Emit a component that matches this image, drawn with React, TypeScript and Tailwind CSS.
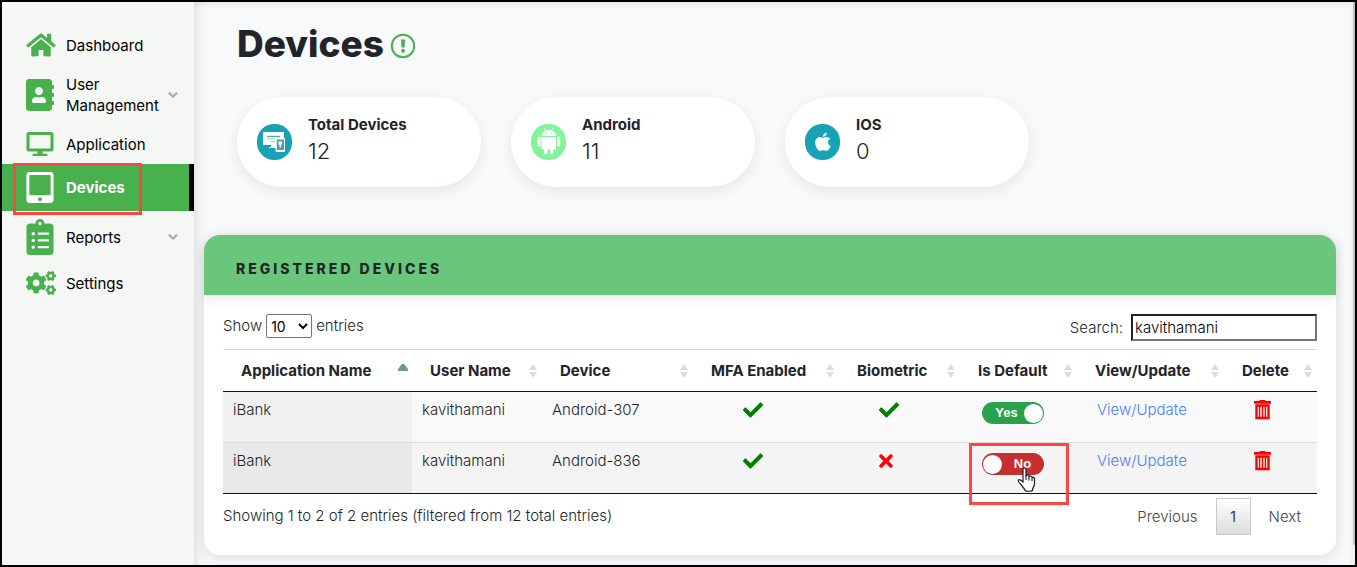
import { useState, type ReactNode } from "react";
import {
  FaAddressBook,
  FaCheck,
  FaChevronDown,
  FaClipboardList,
  FaCogs,
  FaDesktop,
  FaHome,
  FaTabletAlt,
  FaTimes,
} from "react-icons/fa";
import clsx from "clsx";

const navItems = [
  { label: "Dashboard", icon: <FaHome className="h-[26px] w-[30px]" /> },
  { label: "User Management", icon: <FaAddressBook className="h-8 w-7" />, submenu: true },
  { label: "Application", icon: <FaDesktop className="h-6 w-7" /> },
  { label: "Devices", icon: <FaTabletAlt className="h-[31px] w-7" />, active: true },
  { label: "Reports", icon: <FaClipboardList className="h-9 w-7" />, submenu: true },
  { label: "Settings", icon: <FaCogs className="h-6 w-[30px]" /> },
];

const columns = [
  { label: "Application Name", width: "w-[189px]" },
  { label: "User Name", width: "w-[130px]" },
  { label: "Device", width: "w-[151px]" },
  { label: "MFA Enabled", width: "w-[146px]" },
  { label: "Biometric", width: "w-[121px]" },
  { label: "Is Default", width: "w-[117px]" },
  { label: "View/Update", width: "w-[147px]" },
  { label: "Delete", width: "w-[93px]" },
];

const devices = [
  { app: "iBank", user: "kavithamani", device: "Android-307", mfa: true, biometric: true, isDefault: true },
  { app: "iBank", user: "kavithamani", device: "Android-836", mfa: true, biometric: false, isDefault: false },
];

function TotalIcon() {
  return (
    <svg viewBox="0 0 36 36" className="size-9" aria-hidden="true">
      <rect width="35" height="36" rx="17" fill="#17a2b8" />
      <path d="M6 8h21v13H6z" fill="#fff" />
      <path d="M14 21h5v2h2v1h-9v-1h2z" fill="#fff" />
      <path d="M10 12.500h13" stroke="#3fb0c2" strokeWidth="1.400" />
      <path d="M10 15h8M14 17.500h4" stroke="#8fd1db" strokeWidth="1.200" />
      <rect x="18.500" y="14" width="9.500" height="14" rx="1" fill="#fff" />
      <path d="M19.800 15.500H27v10.500h-7.200z" fill="#4f9fb0" />
      <path d="M21.500 17.500h3.500v3h-1v3h-1.500v-3h-1z" fill="#fff" />
    </svg>
  );
}

function AndroidIcon() {
  return (
    <svg viewBox="0 0 36 36" className="size-9" aria-hidden="true">
      <rect width="35" height="36" rx="17" fill="#81f49c" />
      <path d="M13.500 4.500l2 3M22 4.500l-2 3" stroke="#fff" strokeWidth="1" strokeLinecap="round" />
      <path d="M10.500 12c0-3.500 3-6 7.200-6s7.300 2.500 7.300 6z" fill="#fff" />
      <circle cx="14.500" cy="9.300" r=".7" fill="#81f49c" />
      <circle cx="21" cy="9.300" r=".7" fill="#81f49c" />
      <path d="M10.500 13H25v11a1.500 1.500 0 0 1-1.500 1.500H12a1.500 1.500 0 0 1-1.500-1.500z" fill="#fff" />
      <rect x="6.500" y="12.500" width="3.200" height="10" rx="1.600" fill="#fff" />
      <rect x="26" y="12.500" width="3.200" height="10" rx="1.600" fill="#fff" />
      <path d="M13 24h3.500v4.500a1.500 1.500 0 0 1-3.500 0zM19 24h3.500v4.500a1.500 1.500 0 0 1-3.500 0z" fill="#fff" />
    </svg>
  );
}

function AppleIcon() {
  return (
    <svg viewBox="0 0 36 36" className="size-9" aria-hidden="true">
      <rect width="35" height="36" rx="17" fill="#17a2b8" />
      <g transform="translate(10 7.300) scale(.041)">
        <path
          fill="#fff"
          d="M318.700 268.700c-.2-36.700 16.400-64.400 50-84.800-18.800-26.900-47.200-41.700-84.700-44.600-35.500-2.800-74.300 20.700-88.500 20.700-15 0-49.400-19.700-76.400-19.700C63.300 141.200 4 184.800 4 273.500q0 39.300 14.400 81.200c12.800 36.700 59 126.700 107.200 125.200 25.200-.6 43-17.900 75.800-17.900 31.800 0 48.300 17.900 76.400 17.900 48.600-.7 90.400-82.500 102.600-119.300-65.200-30.700-61.700-90-61.700-91.900zm-56.600-164.200c27.300-32.400 24.800-61.900 24-72.500-24.100 1.400-52 16.400-67.900 34.900-17.500 19.800-27.800 44.300-25.600 71.900 26.100 2 49.900-11.400 69.500-34.300z"
        />
      </g>
    </svg>
  );
}

function TrashIcon() {
  return (
    <svg viewBox="0 0 18 20" className="h-5 w-[18px]" aria-hidden="true">
      <path d="M5.500 0h6v1H17v2.700H0V1h5.500z" fill="#f00" />
      <path d="M2.500 5.500v12.500h12V5.500z" fill="#fff" stroke="#f00" strokeWidth="2.400" />
      <path d="M5.600 6v12M8.500 6v12M11.400 6v12" stroke="#f00" strokeWidth="1.500" />
    </svg>
  );
}

function HandCursor() {
  return (
    <svg
      viewBox="0 0 20 26"
      className="pointer-events-none absolute top-6 left-[57px] h-[26px] w-5"
      aria-hidden="true"
    >
      <path
        d="M6 2.500c0-2 3-2 3 0V9c0-1.500 2.800-1.500 3 0v1c0-1.500 2.700-1.300 3 .2v.8c.5-1 2.500-.8 2.500.8V17c0 2-1.500 3.500-2 5v1.500c-1.500 1-6 1-7.500 0C7.500 21 3.500 17.500 1.500 14.500c-.8-1.500 1-2.500 2.300-1.200L6 15z"
        fill="#fff"
        stroke="#1c1c28"
        strokeWidth="1.200"
      />
      <path d="M9 8v5M12 9.500v4M15 11v3" stroke="#1c1c28" strokeWidth="1.100" />
    </svg>
  );
}

const summary = [
  { label: "Total Devices", value: 12, icon: <TotalIcon /> },
  { label: "Android", value: 11, icon: <AndroidIcon /> },
  { label: "IOS", value: 0, icon: <AppleIcon /> },
];

function SortArrows({ sorted }: { sorted?: boolean }) {
  return (
    <svg viewBox="0 0 10 16" className="h-4 w-2.5 shrink-0" aria-hidden="true">
      <path d={sorted ? "M0 8V6l4-5h2l4 5v2z" : "M1 7l4-6 4 6z"} fill={sorted ? "#6f9a7c" : "#dcdcdc"} />
      {!sorted && <path d="M1 9l4 6 4-6z" fill="#dcdcdc" />}
    </svg>
  );
}

function Toggle({ initial, label }: { initial: boolean; label: string }) {
  const [on, setOn] = useState(initial);
  return (
    <label
      className={clsx(
        "flex h-[22px] w-[62px] cursor-pointer items-center rounded-full px-px font-['Liberation_Sans',sans-serif] text-[13px] font-bold text-white ring-1 ring-white",
        on ? "bg-[#2aa14b]" : "flex-row-reverse bg-[#c62f30]"
      )}
    >
      <input
        type="checkbox"
        className="sr-only"
        checked={on}
        onChange={() => setOn(!on)}
        aria-label={label}
      />
      <span className={clsx("flex-1 text-center", on && "pl-1.5")}>{on ? "Yes" : "No"}</span>
      <span className="size-[19px] rounded-full bg-white" />
    </label>
  );
}

function Status({ ok }: { ok: boolean }) {
  return ok ? (
    <FaCheck className="size-5 text-[#008000]" aria-label="Enabled" />
  ) : (
    <FaTimes className="h-5 w-3.5 text-[#ff0000]" aria-label="Disabled" />
  );
}

function Cell({ children, className }: { children: ReactNode; className?: string }) {
  return <td className={clsx("h-[51px] pt-2 align-top", className)}>{children}</td>;
}

function Sidebar() {
  return (
    <nav className="w-48 shrink-0 bg-[#f4f7f4] pt-[22px]">
      {navItems.map((item) => (
        <a
          key={item.label}
          href="#"
          className={clsx(
            "relative flex items-center py-2 pr-4 pl-6",
            item.active ? "border-r-[5px] border-black bg-[#48b04c] font-bold text-white" : "text-black"
          )}
        >
          <span className={clsx("w-10 shrink-0", !item.active && "text-[#48b04c]")}>{item.icon}</span>
          <span className="flex-1 leading-[21px]">{item.label}</span>
          {item.submenu && (
            <FaChevronDown className="size-2.5 shrink-0 stroke-[#aaaaaa] stroke-[40px] text-[#aaaaaa]" />
          )}
          {item.active && (
            <span className="absolute -top-px left-[11px] h-[52px] w-[129px] border-[3px] border-[#ff4444]" />
          )}
        </a>
      ))}
    </nav>
  );
}

function DeviceTable() {
  return (
    <table className="mt-2 w-full table-fixed border-collapse border-t border-b border-t-[#dddddd] border-b-[#111111]">
      <thead>
        <tr className="border-b border-[#111111]">
          {columns.map((col, i) => (
            <th key={col.label} scope="col" className={clsx("h-[42px] pr-1 pl-[18px] text-left font-bold", col.width)}>
              <span className="flex items-center justify-between whitespace-nowrap">
                {col.label}
                <SortArrows sorted={i === 0} />
              </span>
            </th>
          ))}
        </tr>
      </thead>
      <tbody>
        {devices.map((d, i) => (
          <tr
            key={d.device}
            className={i === 0 ? "bg-[#f9f9f9]" : "border-t border-[#dddddd] bg-[#f4f4f4]"}
          >
            <Cell className={clsx("pl-2.5", i === 0 ? "bg-[#f0f0f0]" : "bg-[#e9e9e9]")}>{d.app}</Cell>
            <Cell className="pl-2.5">{d.user}</Cell>
            <Cell className="pl-2.5">{d.device}</Cell>
            <Cell className="pl-[50px]">
              <Status ok={d.mfa} />
            </Cell>
            <Cell className="pl-10">
              <Status ok={d.biometric} />
            </Cell>
            <Cell className="relative pl-[22px]">
              <div className="pt-0.5">
                <Toggle initial={d.isDefault} label={`${d.device} is default`} />
              </div>
              {!d.isDefault && (
                <>
                  <span className="pointer-events-none absolute top-0 left-[9px] h-[62px] w-[100px] border-[3px] border-[#ff4444]" />
                  <HandCursor />
                </>
              )}
            </Cell>
            <Cell className="pl-5">
              <a href="#" className="text-[#4c7dfb]">
                View/Update
              </a>
            </Cell>
            <Cell className="pl-[30px]">
              <button type="button" aria-label={`Delete ${d.device}`} className="block cursor-pointer">
                <TrashIcon />
              </button>
            </Cell>
          </tr>
        ))}
      </tbody>
    </table>
  );
}

export default function App() {
  const [search, setSearch] = useState("kavithamani");

  return (
    <div className="flex min-h-screen border-2 border-black bg-[#f8f9fb] font-[Inter,sans-serif] text-[15px] leading-5 text-[#212529]">
      <Sidebar />

      <main className="min-w-0 flex-1 pr-[15px] pb-2.5 pl-2.5 shadow-[inset_8px_0_10px_-4px_rgba(0,0,0,0.08),inset_0_6px_8px_-4px_rgba(0,0,0,0.08)]">
        <div className="pl-[33px]">
          <h1 className="flex items-center gap-1.5 pt-5 text-[37px] leading-[44px] font-extrabold">
            Devices
            <svg viewBox="0 0 26 26" className="mt-1 size-[26px]" aria-hidden="true">
              <circle cx="13" cy="13" r="11.200" fill="none" stroke="#48b04c" strokeWidth="2" />
              <path d="M11 6.500h4l-.5 8h-3z" fill="#48b04c" />
              <circle cx="13" cy="17.800" r="2" fill="#48b04c" />
            </svg>
          </h1>

          <div className="mt-[31px] flex gap-[30px]">
            {summary.map((card) => (
              <section
                key={card.label}
                className="flex h-[90px] w-61 items-center gap-[15px] rounded-[45px] bg-white pl-5 shadow-[0_4px_14px_rgba(0,0,0,0.08)]"
              >
                {card.icon}
                <div className="pb-1.5">
                  <h2 className="leading-6 font-bold">{card.label}</h2>
                  <p className="text-[22px] leading-7 font-light">{card.value}</p>
                </div>
              </section>
            ))}
          </div>
        </div>

        <section className="mt-12 rounded-2xl bg-white font-light shadow-[0_2px_14px_rgba(0,0,0,0.12)]">
          <h2 className="rounded-t-2xl bg-[#6ac67b] px-8 pt-6 pb-4 text-sm leading-5 font-extrabold tracking-[3px] shadow-[0_4px_12px_rgba(0,0,0,0.08)]">
            REGISTERED DEVICES
          </h2>

          <div className="px-[19px] pt-[19px] pb-5">
            <div className="flex items-start justify-between">
              <label className="flex items-center gap-1">
                Show
                <select className="h-6 w-[46px] rounded-xs border border-[#767676] bg-white text-sm font-normal text-black">
                  <option>10</option>
                  <option>25</option>
                  <option>50</option>
                  <option>100</option>
                </select>
                entries
              </label>
              <label className="flex items-center gap-2">
                Search:
                <input
                  type="search"
                  value={search}
                  onChange={(e) => setSearch(e.target.value)}
                  className="h-[27px] w-[186px] border-2 border-t-[#222222] border-r-[#767676] border-b-[#767676] border-l-[#222222] bg-white px-0.5 text-black outline-none"
                />
              </label>
            </div>

            <DeviceTable />

            <div className="flex justify-between pt-1">
              <p className="pt-2">Showing 1 to 2 of 2 entries (filtered from 12 total entries)</p>
              <div className="flex items-center text-[#444444]">
                <button type="button" className="px-4">
                  Previous
                </button>
                <button
                  type="button"
                  className="mx-0.5 h-[37px] w-[35px] border border-[#cacaca] bg-linear-to-b from-white to-[#dcdcdc] text-sm font-normal text-[#333333]"
                >
                  1
                </button>
                <button type="button" className="px-4">
                  Next
                </button>
              </div>
            </div>
          </div>
        </section>
      </main>

      {/* scrollbar gutter */}
      <div className="w-1 shrink-0 bg-[#f1f1f1] pb-5 pl-0.5">
        <div className="h-full bg-[#c1c1c1]" />
      </div>
    </div>
  );
}
